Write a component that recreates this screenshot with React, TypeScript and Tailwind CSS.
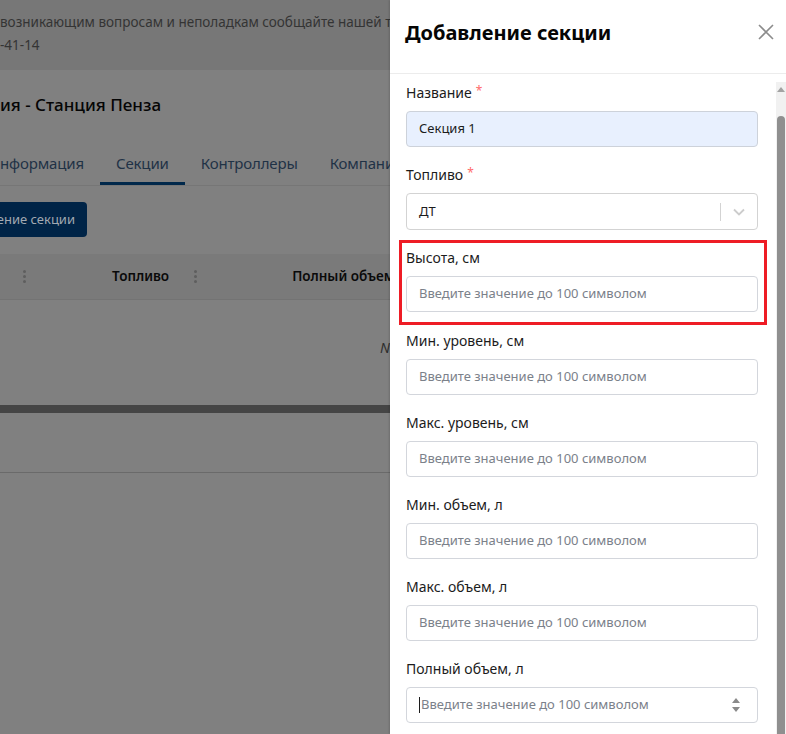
import React from 'react';

// Fields of the drawer form
const numberFields = ['Мин. уровень, см', 'Макс. уровень, см', 'Мин. объем, л', 'Макс. объем, л'];

const PLACEHOLDER = 'Введите значение до 100 символом';

const Label = ({ text, required }: { text: string; required?: boolean }) => (
  <div className="mb-2 flex h-5 items-center text-[14px] leading-5 text-[#1c1c1c]">
    {text}
    {required && <span className="ml-1 -mt-1 text-[12px] text-[#ff6b6b]">*</span>}
  </div>
);

const TextInput = ({ children }: { children?: React.ReactNode }) => (
  <div className="flex h-9 items-center rounded border border-[#d3d6dc] bg-white px-3 text-[13px] text-[#7b818a]">
    {children ?? PLACEHOLDER}
  </div>
);

const ColumnDots = () => (
  <div className="flex flex-col gap-[2px]">
    <span className="h-[3px] w-[3px] rounded-full bg-[#5e5e5e]" />
    <span className="h-[3px] w-[3px] rounded-full bg-[#5e5e5e]" />
    <span className="h-[3px] w-[3px] rounded-full bg-[#5e5e5e]" />
  </div>
);

const BackgroundPage = () => (
  <div className="flex h-full w-[390px] flex-col overflow-hidden bg-[#808080] whitespace-nowrap">
    {/* info banner */}
    <div className="h-[70px] bg-[#777777] pt-[11px] text-[13.5px] leading-[23px] text-[#343434]">
      <div>возникающим вопросам и неполадкам сообщайте нашей т</div>
      <div>-41-14</div>
    </div>

    <div className="mt-[23px] h-6 text-[17px] font-medium leading-6 text-[#050505]">ия - Станция Пенза</div>

    {/* tabs */}
    <div className="mt-[23px] flex h-[46px] border-b border-[#767676] text-[15px] tracking-[-0.15px] text-[#1f3246]">
      <div className="pr-4 pt-[12px]">нформация</div>
      <div className="border-b-[3px] border-[#00284b] px-4 pt-[12px]">Секции</div>
      <div className="px-4 pt-[12px]">Контроллеры</div>
      <div className="px-4 pt-[12px]">Компании</div>
    </div>

    <div className="mt-[16px] flex h-[35px] w-[87px] items-center justify-end rounded-r bg-[#002447] pr-[12px] text-[13px] text-[#a2a9b1]">
      ение секции
    </div>

    {/* data grid header */}
    <div className="mt-[17px] flex h-[46px] items-center border-b border-[#737373] bg-[#7a7a7a] text-[13.5px] font-semibold text-[#0a0a0a]">
      <div className="ml-[23px]"><ColumnDots /></div>
      <div className="ml-[86px]">Топливо</div>
      <div className="ml-[25px]"><ColumnDots /></div>
      <div className="ml-[95px]">Полный объем</div>
    </div>
    <div className="flex h-[105px] items-start pl-[380px] pt-[37px] text-[14px] italic text-[#2e2e2e]">No rows</div>
    <div className="h-[8px] bg-[#454545]" />
    <div className="h-[60px] border-b border-[#6a6a6a]" />
  </div>
);

const Scrollbar = () => (
  <div className="flex w-[10px] flex-col items-center bg-[#f1f1f1] pt-[5px]">
    <svg width="8" height="5" viewBox="0 0 8 5">
      <path d="M0 5 L4 0 L8 5 Z" fill="#a3a3a3" />
    </svg>
    <div className="mt-[24px] w-[8px] flex-1 rounded-t-full bg-[#8f8f8f]" />
  </div>
);

export default function App() {
  return (
    <div className="relative h-[734px] w-full overflow-hidden bg-[#808080] font-['Noto_Sans',sans-serif]">
      <BackgroundPage />

      {/* drawer */}
      <aside className="absolute right-0 top-0 flex h-full w-[396px] flex-col bg-white shadow-[-1px_0_2px_rgba(0,0,0,0.15)]">
        <div className="flex h-[74px] shrink-0 items-center justify-between border-b border-[#ececec] pl-[15px] pr-[12px]">
          <h2 className="-mt-[8px] text-[20px] font-bold text-[#050505]">Добавление секции</h2>
          <button className="-mt-[10px] text-[#8c8c8c]">
            <svg width="16" height="16" viewBox="0 0 16 16" fill="none" stroke="currentColor" strokeWidth="1.6">
              <path d="M1 1 L15 15 M15 1 L1 15" />
            </svg>
          </button>
        </div>

        <div className="flex min-h-0 flex-1 overflow-hidden pt-[8px]">
          <div className="flex w-[386px] flex-col gap-[18px] pl-4 pr-[18px] pt-[1px]">
            <div>
              <Label text="Название" required />
              <div className="flex h-9 items-center rounded border border-[#cdd2da] bg-[#e8f0fe] px-3 text-[13px] text-[#1c1c1c]">
                Секция 1
              </div>
            </div>

            <div>
              <Label text="Топливо" required />
              <div className="flex h-[37px] items-center rounded border border-[#d3d3d3] bg-white pl-3 text-[13px] text-[#1c1c1c]">
                <span className="flex-1">ДТ</span>
                <span className="h-[18px] w-px bg-[#d3d3d3]" />
                <span className="flex w-[36px] justify-center">
                  <svg width="12" height="8" viewBox="0 0 12 8" fill="none" stroke="#cccccc" strokeWidth="1.8">
                    <path d="M1 1.5 L6 6.5 L11 1.5" />
                  </svg>
                </span>
              </div>
            </div>

            <div className="relative mb-px">
              <div className="absolute -top-[8px] -bottom-[13px] -left-[7px] -right-[9px] border-[3px] border-[#ee1c25]" />
              <Label text="Высота, см" />
              <TextInput />
            </div>

            {numberFields.map((f) => (
              <div key={f}>
                <Label text={f} />
                <TextInput />
              </div>
            ))}

            <div>
              <Label text="Полный объем, л" />
              <div className="flex h-9 items-center rounded border border-[#d3d6dc] bg-white pl-3 pr-[16px] text-[13px] text-[#7b818a]">
                <span className="mr-px h-4 w-px bg-[#1c1c1c]" />
                <span className="flex-1">{PLACEHOLDER}</span>
                <svg width="10" height="16" viewBox="0 0 10 16">
                  <path d="M1 6 L5 1 L9 6 Z M1 10 L5 15 L9 10 Z" fill="#8a8a8a" />
                </svg>
              </div>
            </div>
          </div>
          <Scrollbar />
        </div>
      </aside>
    </div>
  );
}
